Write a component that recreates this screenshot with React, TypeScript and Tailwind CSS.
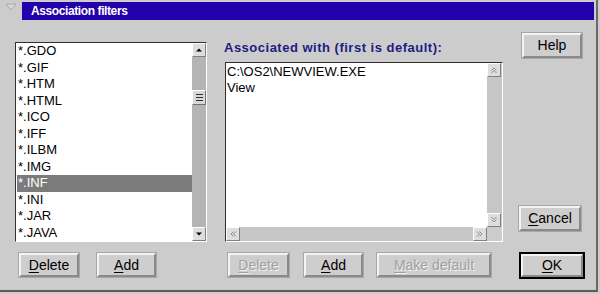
import type { ReactNode } from 'react';

const items = ['*.GDO', '*.GIF', '*.HTM', '*.HTML', '*.ICO', '*.IFF', '*.ILBM', '*.IMG', '*.INF', '*.INI', '*.JAR', '*.JAVA'];

interface BtnProps {
  children: ReactNode;
  className?: string;
  disabled?: boolean;
  isDefault?: boolean;
}

function Btn({ children, className = '', disabled, isDefault }: BtnProps) {
  const inner = (
    <div
      className={`flex h-full w-full items-center justify-center border-2 border-t-[#f4f4f4] border-l-[#f4f4f4] border-b-[#8a8a8a] border-r-[#8a8a8a] bg-[#cecece] text-[14px] ${
        disabled ? 'text-[#a0a0a0] [text-shadow:1px_1px_0_#f0f0f0]' : 'text-black'
      }`}
    >
      {children}
    </div>
  );
  if (isDefault) {
    return <div className={`border-2 border-black ${className}`}>{inner}</div>;
  }
  return <div className={`border border-[#a8a8a8] ${className}`}>{inner}</div>;
}

function U({ children }: { children: ReactNode }) {
  return <span className="underline underline-offset-2">{children}</span>;
}

function ArrowBtn({ dir, dim }: { dir: 'up' | 'down' | 'left' | 'right'; dim?: boolean }) {
  const rot = { up: 0, down: 180, left: 270, right: 90 }[dir];
  return (
    <div className="flex h-[14px] w-[14px] shrink-0 items-center justify-center border border-t-white border-l-white border-b-[#808080] border-r-[#808080] bg-[#dedede]">
      <svg width="8" height="8" viewBox="0 0 8 8" style={{ transform: `rotate(${rot}deg)` }}>
        {dim ? (
          <g fill="none" stroke="#8c8c8c" strokeWidth="1">
            <path d="M1.5 4.5 L4 2 L6.5 4.5" />
            <path d="M1.5 7 L4 4.5 L6.5 7" />
          </g>
        ) : (
          <path d="M1 5.5 L4 2.5 L7 5.5 Z" fill="#000" />
        )}
      </svg>
    </div>
  );
}

export default function App() {
  return (
    <div className="h-[294px] w-[600px] overflow-hidden bg-[#cccccc] font-['Liberation_Sans',Arial,sans-serif]">
      <div className="h-[292px] w-[598px] border-r-2 border-b-2 border-r-[#6a6a6a] border-b-[#5a5a5a]">
        {/* title bar */}
        <div className="flex h-[22px] items-start pt-[2px]">
          <div className="ml-[2px] flex h-[18px] w-[18px] items-start justify-center pt-[1px]">
            <svg width="12" height="9" viewBox="0 0 12 9">
              <path d="M1 1 H11 L6 7 Z" fill="#d8d8d8" stroke="#a8a8a8" strokeWidth="1" />
            </svg>
          </div>
          <div className="ml-[2px] flex h-[18px] flex-1 items-center bg-[#2200aa] pl-[9px] text-[12px] font-bold tracking-[-0.4px] text-white">
            Association filters
          </div>
          <div className="w-[2px]" />
        </div>

        <div className="flex pl-[15px]">
          {/* left column */}
          <div className="flex w-[192px] flex-col pt-[20px]">
            <div className="flex h-[200px] border border-t-[#303030] border-l-[#303030] border-b-white border-r-white">
              <div className="flex-1 bg-white pl-[1px] pt-[0px]">
                {items.map((it) => (
                  <div
                    key={it}
                    className={`h-[16.5px] pl-[1px] text-[13px] leading-[16.5px] ${
                      it === '*.INF' ? 'bg-[#7b7b7b] text-white' : 'text-black'
                    }`}
                  >
                    {it}
                  </div>
                ))}
              </div>
              <div className="flex w-[14px] flex-col bg-[#b4b4b4]">
                <ArrowBtn dir="up" />
                <div className="h-[33px]" />
                <div className="flex h-[15px] w-[14px] flex-col items-center justify-center gap-[2px] border border-t-white border-l-white border-b-[#707070] border-r-[#707070] bg-[#d8d8d8]">
                  <div className="h-px w-[7px] bg-[#303030]" />
                  <div className="h-px w-[7px] bg-[#303030]" />
                  <div className="h-px w-[7px] bg-[#303030]" />
                </div>
                <div className="flex-1" />
                <ArrowBtn dir="down" />
              </div>
            </div>
            <div className="mt-[10px] flex pl-[3px]">
              <Btn className="h-[26px] w-[62px]">
                <U>D</U>elete
              </Btn>
              <Btn className="ml-[16px] h-[26px] w-[61px]">
                <U>A</U>dd
              </Btn>
            </div>
          </div>

          {/* middle column */}
          <div className="ml-[17px] flex w-[279px] flex-col pt-[16px]">
            <div className="h-[24px] text-[13px] font-bold tracking-[0.5px] text-[#1c1c84]">
              Associated with (first is default):
            </div>
            <div className="ml-[1px] grid h-[180px] grid-cols-[1fr_15px] grid-rows-[1fr_14px] border border-t-[#303030] border-l-[#303030] border-b-white border-r-white">
              <div className="bg-white pl-[1px] pt-[1px] text-[13px] leading-[16px] text-black">
                <div>C:\OS2\NEWVIEW.EXE</div>
                <div>View</div>
              </div>
              <div className="flex flex-col bg-[#c6c6c6]">
                <ArrowBtn dir="up" dim />
                <div className="flex-1" />
                <ArrowBtn dir="down" dim />
              </div>
              <div className="flex bg-[#c6c6c6]">
                <ArrowBtn dir="left" dim />
                <div className="flex-1" />
                <ArrowBtn dir="right" dim />
              </div>
              <div className="bg-[#cccccc]" />
            </div>
            <div className="mt-[10px] flex pl-[3px]">
              <Btn disabled className="h-[26px] w-[63px]">
                <U>D</U>elete
              </Btn>
              <Btn className="ml-[13px] h-[26px] w-[61px]">
                <U>A</U>dd
              </Btn>
              <Btn disabled className="ml-[12px] h-[26px] w-[116px]">
                <U>M</U>ake default
              </Btn>
            </div>
          </div>

          {/* right column */}
          <div className="ml-[15px] flex w-[68px] flex-col">
            <Btn className="ml-[3px] mt-[10px] h-[27px] w-[62px]">Help</Btn>
            <Btn className="mt-[146px] h-[27px] w-[64px]">
              <U>C</U>ancel
            </Btn>
            <Btn isDefault className="ml-[1px] mt-[20px] h-[27px] w-[66px]">
              <U>O</U>K
            </Btn>
          </div>
        </div>
      </div>
    </div>
  );
}
